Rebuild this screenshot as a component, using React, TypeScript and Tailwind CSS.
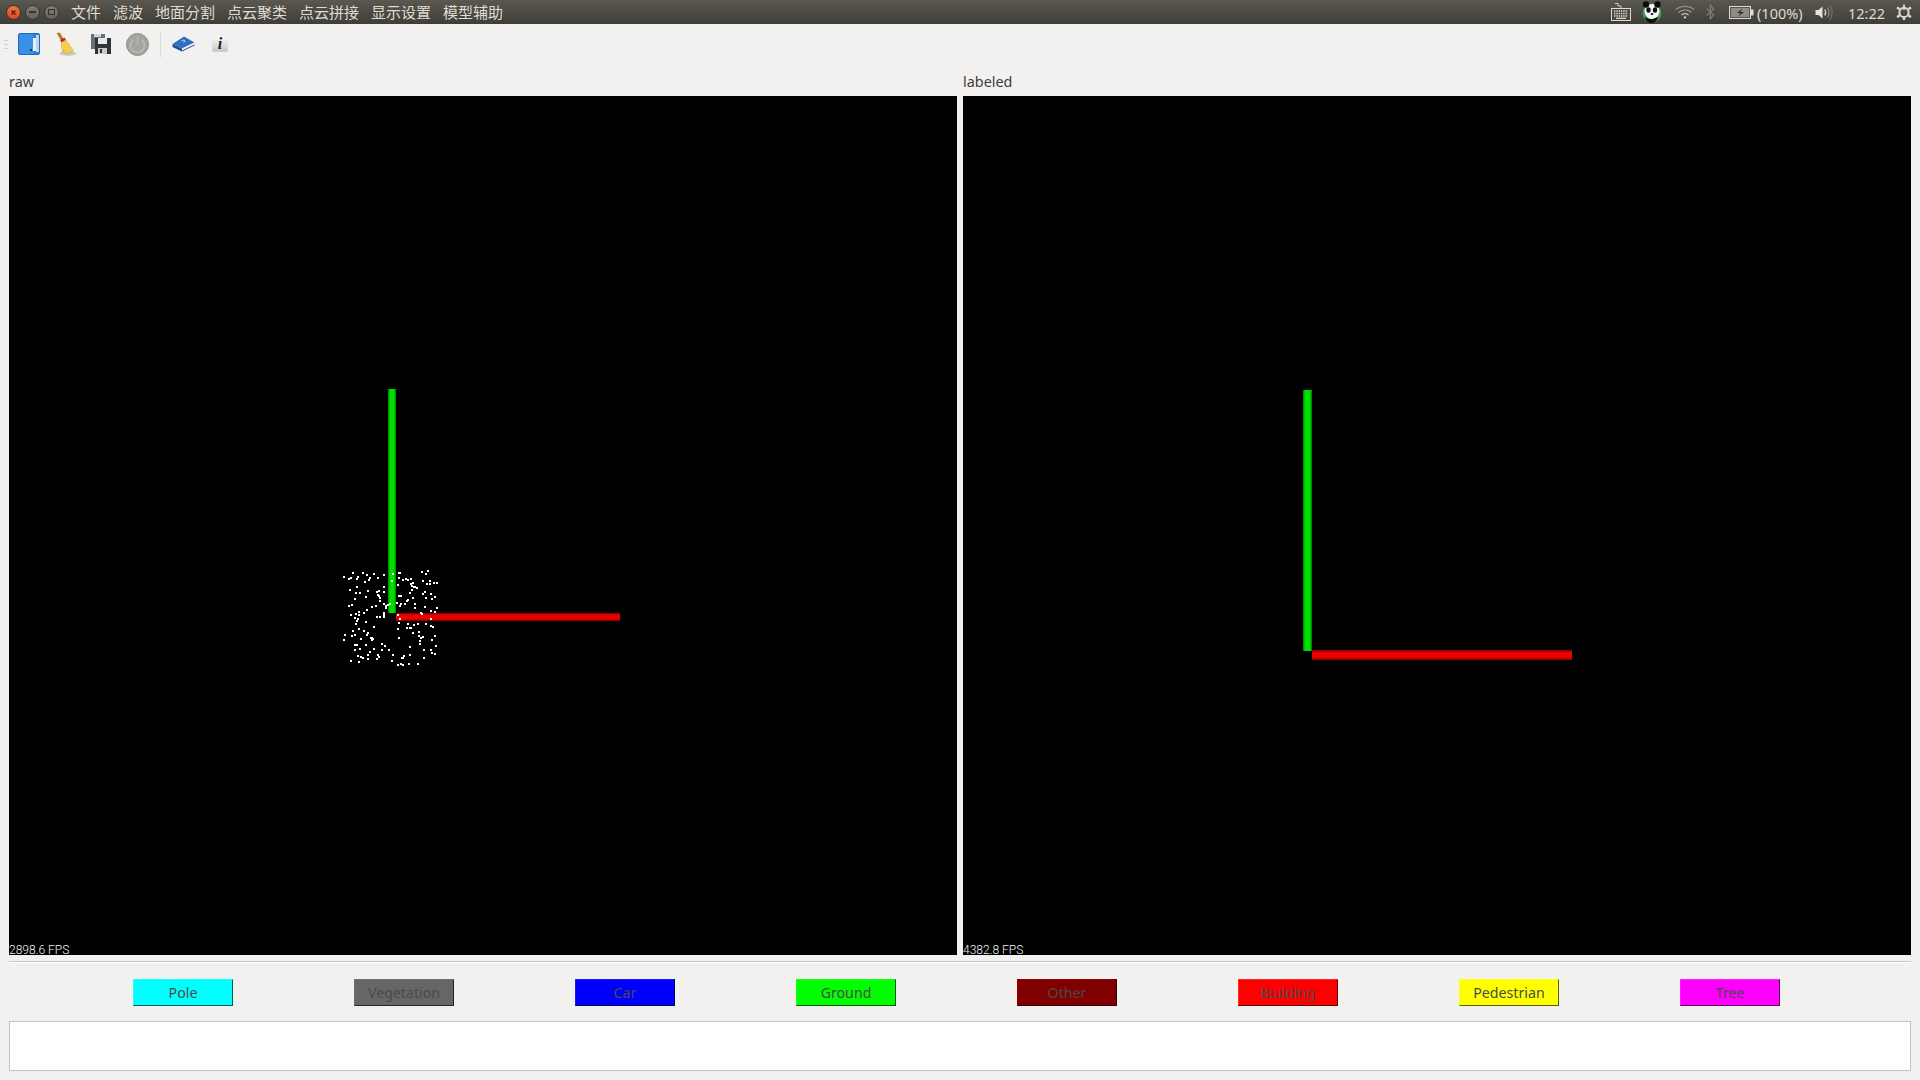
const menus = ["文件", "滤波", "地面分割", "点云聚类", "点云拼接", "显示设置", "模型辅助"]

// button colours: fill + bevel classes written out in full
const labels = [
	{ name: "Pole", cls: "bg-[#00ffff] border-t-[#1affff] border-l-[#1affff] border-r-[#005c5c] border-b-[#005c5c]" },
	{ name: "Vegetation", cls: "bg-[#666666] border-t-[#707070] border-l-[#707070] border-r-[#262626] border-b-[#262626]" },
	{ name: "Car", cls: "bg-[#0000ff] border-t-[#1a1aff] border-l-[#1a1aff] border-r-[#00005c] border-b-[#00005c]" },
	{ name: "Ground", cls: "bg-[#00ff00] border-t-[#1aff1a] border-l-[#1aff1a] border-r-[#005c00] border-b-[#005c00]" },
	{ name: "Other", cls: "bg-[#800000] border-t-[#8c0000] border-l-[#8c0000] border-r-[#300000] border-b-[#300000]" },
	{ name: "Building", cls: "bg-[#ff0000] border-t-[#ff2a2a] border-l-[#ff2a2a] border-r-[#5c0000] border-b-[#5c0000]" },
	{ name: "Pedestrian", cls: "bg-[#ffff00] border-t-[#ffff1a] border-l-[#ffff1a] border-r-[#5c5c00] border-b-[#5c5c00]" },
	{ name: "Tree", cls: "bg-[#ff00ff] border-t-[#ff1aff] border-l-[#ff1aff] border-r-[#5c005c] border-b-[#5c005c]" },
]

// read off the reference at 3x, origin (320,550)
const dots = [
	[72,81],[87,86],[93,84],[99,69],[113,82],[111,87],[129,69],[141,75],[150,85],[147,90],[135,96],[162,72],[174,84],[192,75],[219,72],[216,93],[237,69],[240,69],[237,84],[249,90],[258,87],[264,90],[273,87],[234,104],[273,102],[279,99],[276,108],[282,111],[285,111],[291,114],[306,66],[318,72],[324,63],[309,93],[330,93],[321,101],[330,101],[342,99],[351,99],[111,111],[90,120],[108,129],[120,129],[144,123],[171,126],[177,123],[192,111],[192,126],[174,135],[177,138],[180,144],[180,153],[105,147],[138,141],[276,120],[270,129],[279,144],[240,138],[237,138],[243,138],[309,132],[315,127],[333,132],[345,141],[318,144],[336,147],[87,168],[96,165],[156,171],[168,168],[141,180],[132,189],[117,186],[117,195],[108,192],[93,195],[105,204],[114,207],[111,213],[108,222],[138,216],[192,162],[198,168],[198,174],[204,165],[210,162],[231,159],[243,162],[240,168],[255,162],[264,150],[261,153],[285,162],[285,174],[315,171],[333,183],[345,186],[351,174],[303,189],[306,192],[192,189],[192,195],[192,201],[171,201],[180,201],[234,195],[240,207],[333,207],[237,219],[264,222],[282,225],[294,222],[318,222],[333,228],[339,231],[234,237],[261,234],[270,234],[273,234],[279,249],[297,246],[297,258],[303,264],[309,261],[300,273],[300,282],[336,270],[345,258],[348,288],[312,300],[333,300],[336,309],[345,312],[312,324],[270,291],[270,315],[252,318],[246,324],[249,324],[219,315],[216,333],[207,300],[195,288],[186,282],[186,300],[162,297],[150,306],[138,285],[120,297],[105,300],[105,285],[111,285],[93,333],[114,318],[123,321],[129,324],[117,336],[144,315],[144,327],[171,327],[174,315],[177,321],[237,264],[156,264],[153,264],[159,267],[156,270],[123,267],[141,255],[144,249],[132,243],[117,237],[99,243],[96,258],[105,255],[75,255],[72,270],[162,231],[234,344],[243,342],[249,345],[267,342],[294,342],
]

const AxisDefs = () => (
	<defs>
		<linearGradient id="gv" x1="0" x2="1" y1="0" y2="0">
			<stop offset="0" stopColor="#007800" />
			<stop offset="0.25" stopColor="#00e000" />
			<stop offset="0.75" stopColor="#00e000" />
			<stop offset="1" stopColor="#007800" />
		</linearGradient>
		<linearGradient id="rh" x1="0" x2="0" y1="0" y2="1">
			<stop offset="0" stopColor="#800000" />
			<stop offset="0.3" stopColor="#ee0000" />
			<stop offset="0.7" stopColor="#ee0000" />
			<stop offset="1" stopColor="#800000" />
		</linearGradient>
	</defs>
)

const RawView = () => (
	<svg className="w-full h-full block" viewBox="9 96 948 859">
		<AxisDefs />
		<rect x="388" y="389" width="8" height="224" fill="url(#gv)" />
		<rect x="396" y="613" width="224" height="8" fill="url(#rh)" />
		{dots.map(([x, y], i) => (
			<rect key={i} x={320 + Math.round(x / 3) - 1} y={550 + Math.round(y / 3) - 1} width="2" height="2" fill="#fff" />
		))}
	</svg>
)

const LabeledView = () => (
	<svg className="w-full h-full block" viewBox="963 96 948 859">
		<AxisDefs />
		<rect x="1303" y="390" width="9" height="261" fill="url(#gv)" />
		<rect x="1312" y="650" width="260" height="10" fill="url(#rh)" />
	</svg>
)

const Keyboard = () => (
	<svg width="20" height="20" viewBox="0 0 20 20" className="ml-[21px]">
		<path d="M10 6V4H7V1.5H4" fill="none" stroke="#cfccc5" strokeWidth="1" />
		<rect x="0.5" y="6.5" width="19" height="12" fill="#4a4944" stroke="#dfdbd2" />
		<path d="M3 9h14M3 11.5h14M3 14h14" stroke="#dfdbd2" strokeWidth="1.4" strokeDasharray="1.4 0.9" />
		<path d="M5 16.3h10" stroke="#dfdbd2" strokeWidth="1.3" />
	</svg>
)

const Panda = () => (
	<svg width="20" height="22" viewBox="0 0 20 22" className="ml-[11px]">
		<circle cx="10" cy="12" r="9.5" fill="#3f9a52" />
		<ellipse cx="10" cy="10.5" rx="7.5" ry="7.5" fill="#f6f6f4" />
		<circle cx="4" cy="3.5" r="3.2" fill="#0c0c0c" />
		<circle cx="15.5" cy="3.5" r="3.2" fill="#0c0c0c" />
		<ellipse cx="6.5" cy="9" rx="2.2" ry="2.8" fill="#0c0c0c" />
		<ellipse cx="13" cy="9" rx="2.2" ry="2.8" fill="#0c0c0c" />
		<ellipse cx="10" cy="13" rx="1.4" ry="1" fill="#0c0c0c" />
		<path d="M3 15.5c2 2.5 5 3 8 2.5l5-2c-1 4-3.5 6-6.5 6C6 22 3.5 19.5 3 15.5Z" fill="#0c0c0c" />
	</svg>
)

const Wifi = () => (
	<svg width="20" height="14" viewBox="0 0 20 14" className="ml-[13px]" fill="none" stroke="#c7c4bc" strokeWidth="1.3">
		<path d="M0.8 4.6C6 0.2 14 0.2 19.2 4.6" opacity="0.55" />
		<path d="M3.5 7.4C7.4 4.3 12.6 4.3 16.5 7.4" opacity="0.7" />
		<path d="M6.4 10C8.6 8.4 11.4 8.4 13.6 10" />
		<circle cx="10" cy="12.4" r="1.1" fill="#dfdbd2" stroke="none" />
	</svg>
)

const Bluetooth = () => (
	<svg width="9" height="16" viewBox="0 0 9 16" className="ml-[11px]" fill="none" stroke="#7d7b74" strokeWidth="1.2">
		<path d="M0.8 4.4 7.6 11 4.3 15V1L7.6 5 0.8 11.6" />
	</svg>
)

const Battery = () => (
	<svg width="25" height="13" viewBox="0 0 25 13" className="ml-[14px]">
		<rect x="0.5" y="0.5" width="21" height="12" fill="#56554f" stroke="#dfdbd2" />
		<rect x="2" y="2" width="18" height="9" fill="#8e8c84" />
		<rect x="22" y="3.5" width="2.5" height="6" fill="#dfdbd2" />
		<path d="M13.5 2.6 8 7h3.5L9 10.6 15 6h-3.5Z" fill="#2f2e2a" />
	</svg>
)

const Volume = () => (
	<svg width="19" height="17" viewBox="0 0 19 17" className="ml-[13px]" fill="none">
		<path d="M0.5 6H3.5L7.5 2.5V14.5L3.5 11H0.5Z" fill="#e6e2da" />
		<path d="M9.8 5.5C11 7.5 11 9.5 9.8 11.5" stroke="#dfdbd2" strokeWidth="1.2" />
		<path d="M12.4 3.5C14.4 6.5 14.4 10.5 12.4 13.5" stroke="#8d8b84" strokeWidth="1.2" />
		<path d="M15 1.5C17.8 5.5 17.8 11.5 15 15.5" stroke="#77756e" strokeWidth="1.2" />
	</svg>
)

const Gear = () => (
	<svg width="16" height="16" viewBox="0 0 16 16" className="ml-[13px]" fill="none" stroke="#dfdbd2">
		<circle cx="8" cy="8.4" r="4.6" strokeWidth="2" />
		<path d="M8 0.5V6" strokeWidth="1.8" />
		<path d="M1 3.4 3.6 5M15 3.4 12.4 5M1 13 3.6 11.6M15 13 12.4 11.6M8 13v3" strokeWidth="2.4" />
	</svg>
)

const WindowButtons = () => (
	<div className="flex items-center ml-[6px] gap-[4px]">
		<span className="w-[15px] h-[15px] rounded-full bg-gradient-to-b from-[#f0764a] to-[#d9481c] border border-[#38352f] flex items-center justify-center">
			<svg width="7" height="7" viewBox="0 0 7 7" stroke="#4a1a08" strokeWidth="1.1"><path d="M1.5 1.5l4 4M5.5 1.5l-4 4" /></svg>
		</span>
		<span className="w-[15px] h-[15px] rounded-full bg-gradient-to-b from-[#807d75] to-[#65625b] border border-[#38352f] flex items-center justify-center">
			<span className="w-[7px] h-[1.5px] bg-[#36342f]" />
		</span>
		<span className="w-[15px] h-[15px] rounded-full bg-gradient-to-b from-[#807d75] to-[#65625b] border border-[#38352f] flex items-center justify-center">
			<span className="w-[7px] h-[6px] border border-[#36342f]" />
		</span>
	</div>
)

const TopBar = () => (
	<div className="h-6 shrink-0 flex items-center bg-gradient-to-b from-[#5a5850] to-[#3e3d38] text-[#dfdbd2] font-['Noto_Sans_CJK_SC','Noto_Sans',sans-serif] text-[15px]">
		<WindowButtons />
		<div className="flex ml-[12px] gap-[12px]">
			{menus.map((m) => (
				<span key={m} className="leading-6">{m}</span>
			))}
		</div>
		<div className="ml-auto flex items-center">
			<Keyboard />
			<Panda />
			<Wifi />
			<Bluetooth />
			<Battery />
			<span className="ml-[3px] w-[45px] font-['Noto_Sans',sans-serif] text-[14.5px] leading-6 pt-[1px] whitespace-nowrap">(100%)</span>
			<Volume />
			<span className="ml-[14px] w-[35px] font-['Noto_Sans',sans-serif] text-[14.5px] leading-6 pt-[1px]">12:22</span>
			<Gear />
			<span className="w-[8px]" />
		</div>
	</div>
)

const Toolbar = () => (
	<div className="h-[44px] shrink-0 flex items-center pb-[4px]">
		<div className="ml-[4px] w-[4px] h-[9px] flex flex-col justify-between">
			<span className="h-[1px] bg-[#d2cfca]" />
			<span className="h-[1px] bg-[#d2cfca]" />
			<span className="h-[1px] bg-[#d2cfca]" />
		</div>
		{/* blue sidebar panel */}
		<svg width="22" height="22" viewBox="0 0 22 22" className="ml-[10px]">
			<rect x="0.5" y="0.5" width="21" height="21" rx="1.5" fill="#3a8fe6" stroke="#2468b8" />
			<rect x="15" y="1" width="6" height="20" fill="#2f7fd6" />
			<rect x="15" y="5" width="3" height="13" fill="#e6eff8" />
			<rect x="18" y="2" width="3" height="17" fill="#b9d3ee" />
			<rect x="12" y="16" width="2" height="2" fill="#10345e" />
		</svg>
		{/* broom */}
		<svg width="22" height="24" viewBox="0 0 22 24" className="ml-[15px]">
			<ellipse cx="13" cy="21.5" rx="8.5" ry="2.2" fill="#c9c7c2" />
			<path d="M1.5 1 5 0.5 8.5 7 6 8.5Z" fill="#b67d2a" />
			<path d="M5 8 9.5 5.5 11 8 6.5 10.5Z" fill="#c2281c" />
			<path d="M6.5 10.5 11 8 18.5 19 11 22 9 18 8 21 6.5 15Z" fill="#f1d24a" stroke="#c6a22a" strokeWidth="0.5" />
		</svg>
		{/* floppy */}
		<svg width="20" height="20" viewBox="0 0 20 20" className="ml-[14px]">
			<rect x="0" y="0" width="14" height="15" fill="#6a6f75" />
			<rect x="3" y="0" width="7" height="3" fill="#d5d6d6" />
			<rect x="4" y="4" width="16" height="16" fill="#2f3439" />
			<rect x="7" y="4" width="9" height="6" fill="#e8e8e8" />
			<rect x="7" y="14" width="9" height="6" fill="#c9cacb" />
			<rect x="9" y="15" width="2" height="4" fill="#2f3439" />
		</svg>
		{/* power */}
		<svg width="23" height="23" viewBox="0 0 23 23" className="ml-[15px]" fill="none">
			<circle cx="11.5" cy="11.5" r="11" fill="#a3a3a0" stroke="#8f8f8c" />
			<path d="M7.4 6.8a7 7 0 1 0 8.2 0" stroke="#bcbcb9" strokeWidth="1.3" />
			<path d="M11.5 3.5V11" stroke="#bcbcb9" strokeWidth="1.3" />
		</svg>
		<span className="ml-[11px] w-[1px] h-[25px] bg-[#d9d7d3]" />
		{/* help book */}
		<svg width="23" height="16" viewBox="0 0 23 16" className="ml-[11px]">
			<path d="M0.5 8 12 0.5 22.5 6.5 10 12.5Z" fill="#2f6fc0" />
			<path d="M0.5 8 10 12.5V15.5L0.5 11Z" fill="#1d4f94" />
			<path d="M10 12.5 22.5 6.5V8.5L10 14.5Z" fill="#e9eef5" />
			<path d="M10 14.5 22.5 8.5V9.5L10 15.5Z" fill="#1d4f94" />
			<path d="M9.5 5c2-1.4 4.5-0.7 3 0.7L11.5 6.4" fill="none" stroke="#dce9f8" strokeWidth="1" />
		</svg>
		{/* info */}
		<div className="ml-[17px] w-[16px] h-[16px] rounded-[2px] bg-gradient-to-b from-[#fafafa] to-[#c9c8c5] flex items-center justify-center font-['Liberation_Serif',serif] italic font-bold text-[16px] leading-none text-[#222]">
			i
		</div>
	</div>
)

const Panel = ({ title, fps, children }: { title: string; fps: string; children: React.ReactNode }) => (
	<div className="w-[948px] flex flex-col">
		<div className="h-[28px] leading-[27px] text-[14.4px] text-[#3c3c3c] font-['Noto_Sans',sans-serif]">{title}</div>
		<div className="relative h-[859px] bg-black">
			{children}
			<span className="absolute left-0 bottom-[-2px] text-[12px] leading-[14px] text-[#f0f0f0] font-['Roboto',sans-serif] font-light">
				{fps}
			</span>
		</div>
	</div>
)

export default function App() {
	return (
		<div className="w-[1920px] h-[1080px] overflow-hidden flex flex-col bg-[#f2f1f0] font-['Noto_Sans',sans-serif]">
			<TopBar />
			<Toolbar />
			<div className="flex gap-[6px] px-[9px]">
				<Panel title="raw" fps="2898.6 FPS">
					<RawView />
				</Panel>
				<Panel title="labeled" fps="4382.8 FPS">
					<LabeledView />
				</Panel>
			</div>
			<div className="mx-[9px] mt-[6px] h-[2px] border-t border-b border-t-[#c9c6c1] border-b-white" />
			<div className="flex gap-[121px] pl-[133px] mt-[16px]">
				{labels.map((l) => (
					<button
						key={l.name}
						className={`w-[100px] h-[27px] border border-solid pt-[1px] text-[14.2px] leading-none text-[#4a4a4a] ${l.cls}`}
					>
						{l.name}
					</button>
				))}
			</div>
			<div className="mx-[9px] mt-[15px] h-[50px] bg-white border border-[#c5c2bc]" />
		</div>
	)
}
